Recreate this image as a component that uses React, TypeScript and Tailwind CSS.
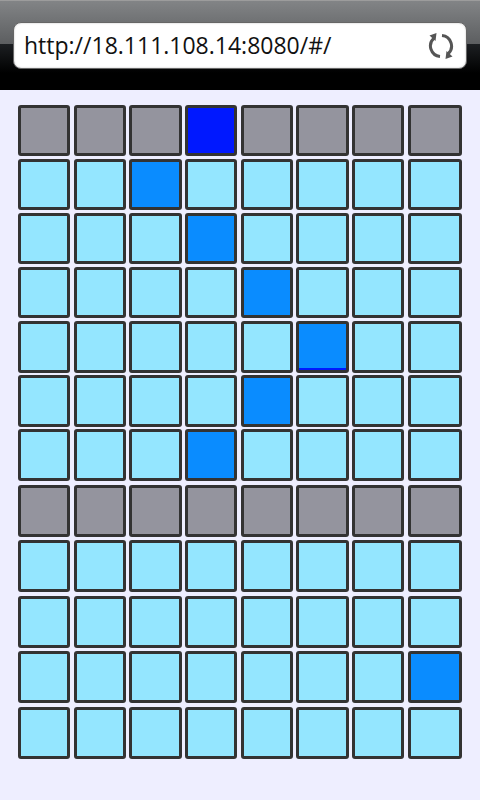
import React from 'react';

const OFF = 'bg-[#94e6ff]';
const HEAD = 'bg-[#94949e]';
const ON = 'bg-[#0a8cff]';

// rows of the sequencer: column that is lit, -1 for none
const upper = [2, 3, 4, 5, 4, 3];
const lower = [-1, -1, 7, -1];

const columns = [0, 1, 2, 3, 4, 5, 6, 7];

const Cell = ({ tone, extra = '' }: { tone: string; extra?: string }) => (
  <div className={`h-full rounded-[3px] border-[3px] border-[#333] ${tone} ${extra}`} />
);

const Row = ({ lit, height }: { lit: number; height: string }) => (
  <div className={`grid grid-cols-[repeat(7,52.2px)_54px] gap-x-[3.5px] ${height}`}>
    {columns.map((c) => (
      <Cell key={c} tone={c === lit ? ON : OFF} extra={c === lit && c === 5 ? 'shadow-[inset_0_-2px_0_#0018ff]' : ''} />
    ))}
  </div>
);

const HeadRow = ({ active, height }: { active: number; height: string }) => (
  <div className={`grid grid-cols-[repeat(7,52.2px)_54px] gap-x-[3.5px] ${height}`}>
    {columns.map((c) => (
      <Cell key={c} tone={c === active ? 'bg-[#0018ff]' : HEAD} />
    ))}
  </div>
);

const ReloadIcon = () => (
  <svg viewBox="0 0 26 26" className="h-[26px] w-[26px]" fill="none">
    <path d="M12 23.5A10.5 10.5 0 0 1 6 5.2" stroke="#555" strokeWidth="3" />
    <path d="M14 2.5A10.5 10.5 0 0 1 20 20.8" stroke="#555" strokeWidth="3" />
    <path d="M8.5 0L1.5 2.5L7.5 8Z" fill="#555" />
    <path d="M17.5 26L24.5 23.5L18.5 18Z" fill="#555" />
  </svg>
);

export default function App() {
  return (
    <div className="flex min-h-[800px] flex-col bg-[#eeeeff] font-['Open_Sans','Noto_Sans',sans-serif]">
      <header className="h-[90px] border-t border-[#9c9c9c] bg-[linear-gradient(#828486_0,#5c5e60_43px,#1c1f22_43px,#000_72px)] px-[13px] pt-[21px]">
        <div className="flex h-[47px] items-center justify-between rounded-[8px] border border-[#666] bg-white pl-[10px] pr-[12px] shadow-[inset_0_0_2px_#bbb]">
          <span className="text-[23px] leading-none text-[#111]">http://18.111.108.14:8080/#/</span>
          <ReloadIcon />
        </div>
      </header>
      <main className="flex flex-col px-[18px] pt-[15px]">
        <div className="flex flex-col gap-y-[2.9px]">
          <HeadRow active={3} height="h-[51.2px]" />
          {upper.map((lit, i) => (
            <Row key={i} lit={lit} height="h-[51.2px]" />
          ))}
        </div>
        <div className="mt-[4px] flex flex-col gap-y-[3.3px]">
          <HeadRow active={-1} height="h-[52.2px]" />
          {lower.map((lit, i) => (
            <Row key={i} lit={lit} height="h-[52.2px]" />
          ))}
        </div>
      </main>
    </div>
  );
}
